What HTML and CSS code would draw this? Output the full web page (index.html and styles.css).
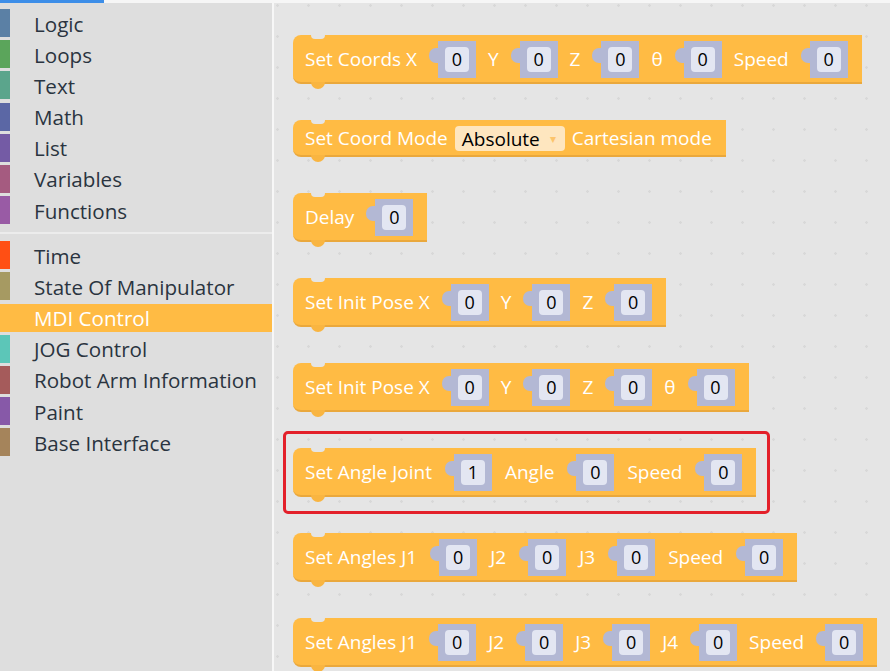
FILE: index.html
```html
<!DOCTYPE html>
<html lang="en">
  <head>
    <meta charset="UTF-8" />
    <title>MDI Control</title>
    <link rel="stylesheet" href="styles.css">
  </head>
  <body>
    <div class="topbar"><span class="topbar__tab"></span></div>
    <div class="l-main">
      <aside class="c-toolbox">
        <ul class="c-cats">
          <li class="c-cat"><span class="c-cat__swatch" style="background:#5b80a5"></span><span class="c-cat__label">Logic</span></li>
          <li class="c-cat"><span class="c-cat__swatch" style="background:#5ba55b"></span><span class="c-cat__label">Loops</span></li>
          <li class="c-cat"><span class="c-cat__swatch" style="background:#5ba58c"></span><span class="c-cat__label">Text</span></li>
          <li class="c-cat"><span class="c-cat__swatch" style="background:#5b67a5"></span><span class="c-cat__label">Math</span></li>
          <li class="c-cat"><span class="c-cat__swatch" style="background:#745ba5"></span><span class="c-cat__label">List</span></li>
          <li class="c-cat"><span class="c-cat__swatch" style="background:#a55b80"></span><span class="c-cat__label">Variables</span></li>
          <li class="c-cat"><span class="c-cat__swatch" style="background:#995ba5"></span><span class="c-cat__label">Functions</span></li>
        </ul>
        <div class="c-toolbox__sep"></div>
        <ul class="c-cats">
          <li class="c-cat"><span class="c-cat__swatch" style="background:#ff4f14"></span><span class="c-cat__label">Time</span></li>
          <li class="c-cat"><span class="c-cat__swatch" style="background:#a69a62"></span><span class="c-cat__label">State Of Manipulator</span></li>
          <li class="c-cat is-selected"><span class="c-cat__swatch" style="background:#ffbb44"></span><span class="c-cat__label">MDI Control</span></li>
          <li class="c-cat"><span class="c-cat__swatch" style="background:#5cc6b8"></span><span class="c-cat__label">JOG Control</span></li>
          <li class="c-cat"><span class="c-cat__swatch" style="background:#a55b5b"></span><span class="c-cat__label">Robot Arm Information</span></li>
          <li class="c-cat"><span class="c-cat__swatch" style="background:#8759a8"></span><span class="c-cat__label">Paint</span></li>
          <li class="c-cat"><span class="c-cat__swatch" style="background:#a5845b"></span><span class="c-cat__label">Base Interface</span></li>
        </ul>
      </aside>

      <section class="c-workspace">
        <div class="c-block">
          <span class="c-block__label">Set Coords X</span>
          <span class="c-socket"><span class="c-socket__body"><span class="c-field">0</span></span></span>
          <span class="c-block__label">Y</span>
          <span class="c-socket"><span class="c-socket__body"><span class="c-field">0</span></span></span>
          <span class="c-block__label">Z</span>
          <span class="c-socket"><span class="c-socket__body"><span class="c-field">0</span></span></span>
          <span class="c-block__label">θ</span>
          <span class="c-socket"><span class="c-socket__body"><span class="c-field">0</span></span></span>
          <span class="c-block__label">Speed</span>
          <span class="c-socket"><span class="c-socket__body"><span class="c-field">0</span></span></span>
        </div>

        <div class="c-block c-block--flat">
          <span class="c-block__label">Set Coord Mode</span>
          <span class="c-dropdown">Absolute <span class="c-dropdown__arrow">▾</span></span>
          <span class="c-block__label">Cartesian mode</span>
        </div>

        <div class="c-block">
          <span class="c-block__label">Delay</span>
          <span class="c-socket"><span class="c-socket__body"><span class="c-field">0</span></span></span>
        </div>

        <div class="c-block">
          <span class="c-block__label">Set Init Pose X</span>
          <span class="c-socket"><span class="c-socket__body"><span class="c-field">0</span></span></span>
          <span class="c-block__label">Y</span>
          <span class="c-socket"><span class="c-socket__body"><span class="c-field">0</span></span></span>
          <span class="c-block__label">Z</span>
          <span class="c-socket"><span class="c-socket__body"><span class="c-field">0</span></span></span>
        </div>

        <div class="c-block">
          <span class="c-block__label">Set Init Pose X</span>
          <span class="c-socket"><span class="c-socket__body"><span class="c-field">0</span></span></span>
          <span class="c-block__label">Y</span>
          <span class="c-socket"><span class="c-socket__body"><span class="c-field">0</span></span></span>
          <span class="c-block__label">Z</span>
          <span class="c-socket"><span class="c-socket__body"><span class="c-field">0</span></span></span>
          <span class="c-block__label">θ</span>
          <span class="c-socket"><span class="c-socket__body"><span class="c-field">0</span></span></span>
        </div>

        <div class="c-block c-block--wide">
          <span class="c-marker"></span>
          <span class="c-block__label">Set Angle Joint</span>
          <span class="c-socket"><span class="c-socket__body"><span class="c-field">1</span></span></span>
          <span class="c-block__label">Angle</span>
          <span class="c-socket"><span class="c-socket__body"><span class="c-field">0</span></span></span>
          <span class="c-block__label">Speed</span>
          <span class="c-socket"><span class="c-socket__body"><span class="c-field">0</span></span></span>
        </div>

        <div class="c-block c-block--wide">
          <span class="c-block__label">Set Angles J1</span>
          <span class="c-socket"><span class="c-socket__body"><span class="c-field">0</span></span></span>
          <span class="c-block__label">J2</span>
          <span class="c-socket"><span class="c-socket__body"><span class="c-field">0</span></span></span>
          <span class="c-block__label">J3</span>
          <span class="c-socket"><span class="c-socket__body"><span class="c-field">0</span></span></span>
          <span class="c-block__label">Speed</span>
          <span class="c-socket"><span class="c-socket__body"><span class="c-field">0</span></span></span>
        </div>

        <div class="c-block">
          <span class="c-block__label">Set Angles J1</span>
          <span class="c-socket"><span class="c-socket__body"><span class="c-field">0</span></span></span>
          <span class="c-block__label">J2</span>
          <span class="c-socket"><span class="c-socket__body"><span class="c-field">0</span></span></span>
          <span class="c-block__label">J3</span>
          <span class="c-socket"><span class="c-socket__body"><span class="c-field">0</span></span></span>
          <span class="c-block__label">J4</span>
          <span class="c-socket"><span class="c-socket__body"><span class="c-field">0</span></span></span>
          <span class="c-block__label">Speed</span>
          <span class="c-socket"><span class="c-socket__body"><span class="c-field">0</span></span></span>
        </div>
      </section>
    </div>
  </body>
</html>
```

FILE: styles.css
```css
:root {
  --toolbox: #dedede;
  --workspace: #e5e5e5;
  --dot: #d8d8d8;
  --block: #ffbb44;
  --block-edge: #eaa83c;
  --socket: #b3b8d4;
  --field: #e3e6f2;
  --text: #2a3440;
  --marker: #e3202a;
}

html,
body {
  margin: 0;
  height: 100%;
  overflow: hidden;
}

body {
  font-family: "Open Sans", "Noto Sans", sans-serif;
  background: var(--workspace);
  color: var(--text);
}

.topbar {
  height: 3px;
  background: #f6f6f6;
}

.topbar__tab {
  display: block;
  width: 104px;
  height: 3px;
  background: #3d8ee8;
}

.l-main {
  display: flex;
  height: calc(100% - 3px);
}

/* toolbox */

.c-toolbox {
  width: 272px;
  flex-shrink: 0;
  background: var(--toolbox);
  border-right: 2px solid #f7f7f7;
  padding-top: 6px;
}

.c-cats {
  list-style: none;
  margin: 0;
  padding: 0;
}

.c-cat {
  display: flex;
  align-items: center;
  height: 28px;
  margin-bottom: 3.2px;
  font-size: 20.6px;
  white-space: nowrap;
}

.c-cat__swatch {
  width: 10px;
  height: 28px;
  margin-right: 24px;
}

.c-cat__label {
  margin-top: 1px;
}

.c-cat.is-selected {
  background: var(--block);
  color: #ffffff;
}

.c-toolbox__sep {
  height: 2px;
  margin: 8px 0 7px;
  background: #ececec;
}

/* workspace */

.c-workspace {
  flex: 1;
  display: flex;
  flex-direction: column;
  align-items: flex-start;
  gap: 36px;
  padding: 32px 0 0 19px;
  background-color: var(--workspace);
  background-image: radial-gradient(circle, var(--dot) 1px, transparent 1.5px);
  background-size: 31px 31px;
  background-position: -12px -13px;
}

.c-block {
  position: relative;
  display: flex;
  align-items: center;
  gap: 12px;
  padding: 6px 14px 4px 12px;
  background: var(--block);
  border-bottom: 2px solid var(--block-edge);
  border-radius: 8px 0 0 8px;
  white-space: nowrap;
}

.c-block::before {
  content: "";
  position: absolute;
  top: 0;
  left: 18px;
  width: 14px;
  height: 4px;
  background: var(--workspace);
  border-radius: 0 0 7px 7px;
}

.c-block::after {
  content: "";
  position: absolute;
  bottom: -7px;
  left: 18px;
  width: 14px;
  height: 7px;
  background: #f9b541;
  border-radius: 0 0 7px 7px;
}

.c-block--flat {
  gap: 7px;
}

.c-block--wide {
  gap: 13px;
}

.c-block__label {
  color: #ffffff;
  font-size: 19px;
  line-height: 25px;
}

.c-socket {
  display: flex;
  align-items: flex-start;
}

.c-socket::before {
  content: "";
  width: 9px;
  height: 15px;
  margin-top: 7px;
  background: var(--socket);
  border-radius: 7px 0 0 7px;
}

.c-socket__body {
  display: flex;
  align-items: center;
  justify-content: center;
  width: 38px;
  height: 37px;
  background: var(--socket);
}

.c-field {
  width: 24px;
  height: 25px;
  line-height: 25px;
  text-align: center;
  border-radius: 4px;
  background: var(--field);
  color: #000000;
  font-size: 18px;
}

.c-dropdown {
  display: flex;
  align-items: center;
  gap: 10px;
  height: 25px;
  padding: 0 9px 0 7px;
  border-radius: 4px;
  background: #fee6bf;
  color: #000000;
  font-size: 19px;
}

.c-dropdown__arrow {
  color: #fcc46b;
  font-size: 12px;
}

.c-marker {
  position: absolute;
  top: -17px;
  left: -10px;
  right: -14px;
  bottom: -19px;
  border: 3px solid var(--marker);
  border-radius: 5px;
}
```
